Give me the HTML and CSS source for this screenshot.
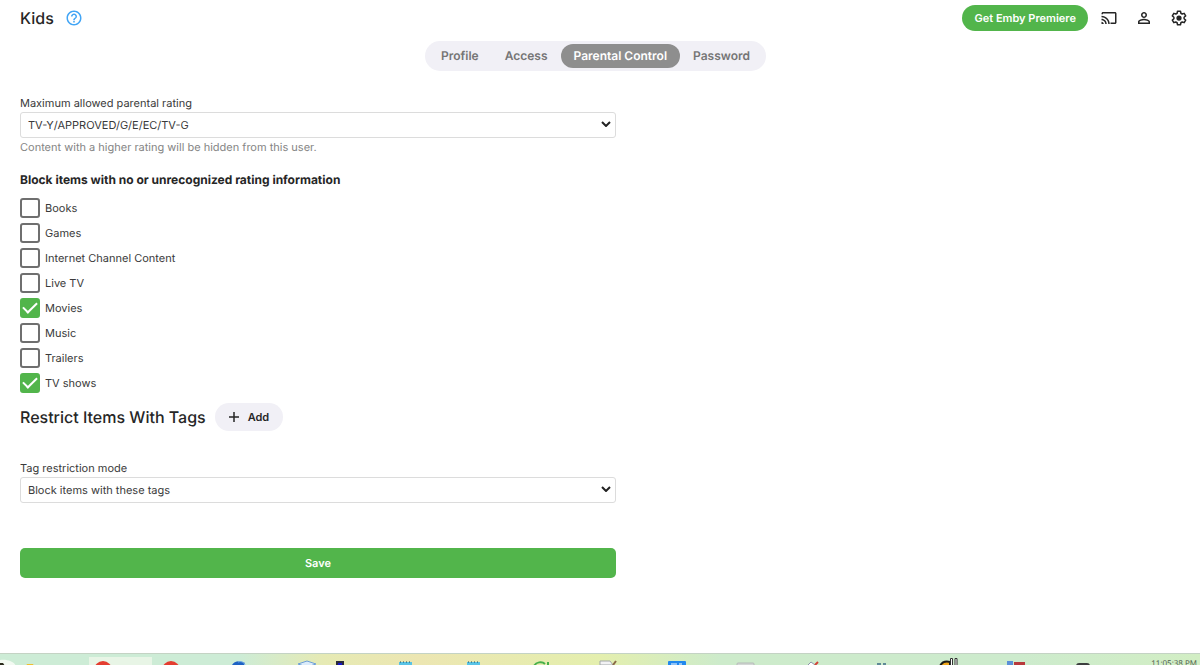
FILE: index.html
```html
<!DOCTYPE html>
<html lang="en">
  <head>
    <meta charset="UTF-8" />
    <meta name="viewport" content="width=device-width, initial-scale=1.0" />
    <title>Kids - Parental Control</title>
    <link rel="stylesheet" href="styles.css">
  </head>

  <body>
    <header class="header">
      <h1 class="header__title">Kids</h1>
      <a href="#" class="header__help" aria-label="Help">
        <svg width="18" height="18" viewBox="0 0 24 24" fill="currentColor">
          <path d="M11 18h2v-2h-2v2zm1-16C6.480 2 2 6.480 2 12s4.480 10 10 10 10-4.480 10-10S17.520 2 12 2zm0 18c-4.410 0-8-3.590-8-8s3.590-8 8-8 8 3.590 8 8-3.590 8-8 8zm0-14c-2.210 0-4 1.790-4 4h2c0-1.100.9-2 2-2s2 .9 2 2c0 2-3 1.750-3 5h2c0-2.250 3-2.500 3-5 0-2.210-1.790-4-4-4z" />
        </svg>
      </a>
      <div class="header__actions">
        <button type="button" class="premiere-btn">Get Emby Premiere</button>
        <button type="button" class="icon-btn" aria-label="Cast">
          <svg width="18" height="18" viewBox="0 0 24 24" fill="currentColor">
            <path d="M20 4H4c-1.100 0-2 .9-2 2v1h2V6h16v12h-6v2h6c1.100 0 2-.9 2-2V6c0-1.100-.9-2-2-2zM2 17v3h3c0-1.660-1.340-3-3-3zm0-4v2c2.760 0 5 2.240 5 5h2c0-3.870-3.130-7-7-7zm0-4v2c4.970 0 9 4.030 9 9h2c0-6.080-4.930-11-11-11z" />
          </svg>
        </button>
        <button type="button" class="icon-btn" aria-label="User">
          <svg width="18" height="18" viewBox="0 0 24 24" fill="currentColor">
            <path d="M12 6c1.100 0 2 .9 2 2s-.9 2-2 2-2-.9-2-2 .9-2 2-2m0 9c2.700 0 5.800 1.290 6 2v1H6v-1c.2-.72 3.300-2 6-2m0-11C9.790 4 8 5.790 8 8s1.790 4 4 4 4-1.790 4-4-1.790-4-4-4zm0 9c-2.670 0-8 1.340-8 4v3h16v-3c0-2.660-5.330-4-8-4z" />
          </svg>
        </button>
        <button type="button" class="icon-btn" aria-label="Settings">
          <svg width="18" height="18" viewBox="0 0 24 24" fill="none" stroke="currentColor" stroke-width="2">
            <path d="M10 3h4l.5 2.700 1.800 1 2.600-.9 2 3.400-2.100 1.800v2l2.100 1.800-2 3.400-2.600-.9-1.800 1L14 21h-4l-.5-2.700-1.800-1-2.600.9-2-3.400L5.200 13v-2L3.100 9.200l2-3.400 2.600.9 1.800-1z" stroke-linejoin="round" />
            <circle cx="12" cy="12" r="2.500" fill="currentColor" />
          </svg>
        </button>
      </div>
    </header>

    <nav class="tabs">
      <a href="#" class="tabs__item">Profile</a>
      <a href="#" class="tabs__item">Access</a>
      <a href="#" class="tabs__item tabs__item--active">Parental Control</a>
      <a href="#" class="tabs__item">Password</a>
    </nav>

    <main class="content">
      <form class="form">
        <label for="rating" class="label">Maximum allowed parental rating</label>
        <div class="select">
          <select id="rating">
            <option>TV-Y/APPROVED/G/E/EC/TV-G</option>
          </select>
          <svg class="select__arrow" width="10" height="6" viewBox="0 0 10 6">
            <path d="M1 1l4 4 4-4" />
          </svg>
        </div>
        <p class="description">Content with a higher rating will be hidden from this user.</p>

        <h2 class="subheading">Block items with no or unrecognized rating information</h2>
        <div class="checks">
          <label class="check"><input type="checkbox" />Books</label>
          <label class="check"><input type="checkbox" />Games</label>
          <label class="check"><input type="checkbox" />Internet Channel Content</label>
          <label class="check"><input type="checkbox" />Live TV</label>
          <label class="check"><input type="checkbox" checked />Movies</label>
          <label class="check"><input type="checkbox" />Music</label>
          <label class="check"><input type="checkbox" />Trailers</label>
          <label class="check"><input type="checkbox" checked />TV shows</label>
        </div>

        <div class="tags">
          <h2 class="tags__title">Restrict Items With Tags</h2>
          <button type="button" class="add-btn">
            <svg width="10" height="10" viewBox="0 0 10 10">
              <path d="M5 0v10M0 5h10" stroke="currentColor" stroke-width="1.500" />
            </svg>
            Add
          </button>
        </div>

        <label for="mode" class="label">Tag restriction mode</label>
        <div class="select">
          <select id="mode">
            <option>Block items with these tags</option>
          </select>
          <svg class="select__arrow" width="10" height="6" viewBox="0 0 10 6">
            <path d="M1 1l4 4 4-4" />
          </svg>
        </div>

        <button type="submit" class="save-btn">Save</button>
      </form>
    </main>

    <footer class="taskbar">
      <div class="taskbar__start">
        <svg width="89" height="12" viewBox="0 0 89 12">
          <path d="M0 6c8-1 14 2 16 6H0z" fill="#f3faf2" />
          <path d="M0 9h3l2 3H0z" fill="#2b2a1c" />
          <path d="M26 12l1-2h6l1 2z" fill="#efc02f" />
        </svg>
      </div>
      <div class="task task--active">
        <svg width="20" height="12"><circle cx="10" cy="17" r="9" fill="#e43d30" /></svg>
      </div>
      <div class="task">
        <svg width="20" height="12"><circle cx="10" cy="17" r="9" fill="#e43d30" /></svg>
      </div>
      <div class="task">
        <svg width="20" height="12">
          <path d="M3 12c2-4 8-5 13-2l-1 2z" fill="#1d62c4" />
          <path d="M9 9c3-1 6 0 7 3" fill="none" stroke="#7fb4e8" />
        </svg>
      </div>
      <div class="task task--narrow">
        <svg width="20" height="12"><path d="M1 11l9-3 9 3-9 3z" fill="#dcecfa" stroke="#6d9fd8" /></svg>
      </div>
      <div class="task task--mid">
        <svg width="20" height="12">
          <rect x="5" y="8" width="8" height="6" fill="#2a2a3a" />
          <rect x="7" y="10" width="4" height="4" fill="#1414c8" />
        </svg>
      </div>
      <div class="task">
        <svg width="20" height="12">
          <rect x="4" y="9" width="13" height="5" fill="#58c3e6" />
          <path d="M5 9h11" stroke="#1e4c5c" stroke-dasharray="1 2" />
        </svg>
      </div>
      <div class="task">
        <svg width="20" height="12">
          <rect x="4" y="9" width="13" height="5" fill="#58c3e6" />
          <path d="M5 9h11" stroke="#1e4c5c" stroke-dasharray="1 2" />
        </svg>
      </div>
      <div class="task">
        <svg width="20" height="12"><path d="M3 13c2-4 8-5 11-2M17 9v4" fill="none" stroke="#46b04a" stroke-width="2" /></svg>
      </div>
      <div class="task">
        <svg width="20" height="12">
          <path d="M1 8h10l3 4H1z" fill="#f2f2f4" stroke="#a3a8a8" />
          <path d="M17 8l-3 4" stroke="#8a6a48" stroke-width="2" />
        </svg>
      </div>
      <div class="task">
        <svg width="20" height="12">
          <rect x="1" y="8" width="18" height="6" rx="1" fill="#2188ee" />
          <path d="M4 11h6M12 11h3" stroke="#fff" />
        </svg>
      </div>
      <div class="task">
        <svg width="20" height="12"><rect x="2" y="10" width="17" height="5" rx="1" fill="#d3d8d5" stroke="#b5bab8" /></svg>
      </div>
      <div class="task">
        <svg width="20" height="12">
          <path d="M5 12l3-3 4 3" fill="#fff" stroke="#8a93a8" />
          <path d="M15 9l-3 3" stroke="#d14438" stroke-width="2" />
        </svg>
      </div>
      <div class="task">
        <svg width="20" height="12"><path d="M6 11h4M12 11h3" stroke="#5f8a96" stroke-width="2" /></svg>
      </div>
      <div class="task">
        <svg width="20" height="12">
          <path d="M1 13c2-4 6-5 10-4v4z" fill="#f0a91c" stroke="#1c1c18" stroke-width="2" />
          <path d="M11.500 12V5.500h2V12M16 12V5.500h2V12" fill="#fff" stroke="#333" />
        </svg>
      </div>
      <div class="task">
        <svg width="20" height="12">
          <rect x="0" y="8" width="6" height="6" fill="#5a8fd8" />
          <rect x="7" y="9" width="11" height="5" fill="#b8393c" />
        </svg>
      </div>
      <div class="task">
        <svg width="20" height="12"><rect x="1" y="10" width="14" height="6" rx="3" fill="#3c3f3e" /></svg>
      </div>
      <time class="taskbar__clock">11:05:38 PM</time>
    </footer>
  </body>
</html>
```
FILE: styles.css
```css
* {
  box-sizing: border-box;
}
body {
  margin: 0;
  height: 100vh;
  display: flex;
  flex-direction: column;
  background-color: #fff;
  color: #262626;
  font-family: Inter, "Liberation Sans", sans-serif;
  font-size: 11px;
  line-height: 16px;
  text-rendering: geometricPrecision;
}
button,
select {
  font: inherit;
  color: inherit;
  border: 0;
  text-rendering: inherit;
}
svg {
  display: block;
}
h1,
h2,
p {
  margin: 0;
}

.header {
  display: flex;
  align-items: center;
  padding: 5px 10px 0 20px;
}
.header__title {
  font-size: 16px;
  font-weight: 500;
  line-height: 24px;
}
.header__help {
  margin-left: 11px;
  color: #42a5f5;
}
.header__actions {
  display: flex;
  align-items: center;
  gap: 13px;
  margin-left: auto;
}
.premiere-btn {
  margin-right: -3px;
  padding: 5px 12px;
  border-radius: 13px;
  background-color: #52b54b;
  color: #fff;
  font-weight: 600;
}
.icon-btn {
  padding: 2px;
  background: none;
}

.tabs {
  align-self: center;
  display: flex;
  margin: 10px 9px 0 0;
  padding: 3px;
  border-radius: 15px;
  background-color: #f1f0f6;
}
.tabs__item {
  padding: 4px 13px;
  border-radius: 12px;
  color: #757575;
  font-size: 12px;
  font-weight: 600;
  text-decoration: none;
}
.tabs__item--active {
  background-color: #8e8e8e;
  color: #fff;
}

.content {
  flex: 1;
  padding: 24px 20px 0;
}
.form {
  max-width: 596px;
}
.label {
  display: block;
  margin-bottom: 1px;
  color: #3a3a3a;
}
.select {
  position: relative;
}
.select select {
  display: block;
  width: 100%;
  padding: 4px 7px;
  border: 1px solid #dcdcdc;
  border-radius: 3px;
  background-color: #fff;
  color: #3a3a3a;
  appearance: none;
}
.select__arrow {
  position: absolute;
  top: 9px;
  right: 5px;
  fill: none;
  stroke: #222;
  stroke-width: 2;
}
.description {
  margin-top: 1px;
  color: #858585;
}

.subheading {
  margin-top: 17px;
  font-size: 12px;
  font-weight: 700;
}
.checks {
  display: grid;
  gap: 5px;
  margin-top: 10px;
}
.check {
  display: flex;
  align-items: center;
  gap: 5px;
  color: #3a3a3a;
}
.check input {
  appearance: none;
  width: 20px;
  height: 20px;
  margin: 0;
  border: 2px solid #6f6f6f;
  border-radius: 3px;
}
.check input:checked {
  display: grid;
  place-items: center;
  border-color: #52b54b;
  background-color: #52b54b;
}
.check input:checked::before {
  content: "";
  width: 12px;
  height: 6px;
  margin-bottom: 5px;
  border: solid #fff;
  border-width: 0 0 2px 2px;
  transform: rotate(-45deg);
}

.tags {
  display: flex;
  align-items: center;
  gap: 9px;
  margin: 10px 0 29px;
}
.tags__title {
  font-size: 16px;
  font-weight: 500;
  line-height: 24px;
}
.add-btn {
  display: flex;
  align-items: center;
  gap: 9px;
  padding: 6px 14px;
  border-radius: 14px;
  background-color: #f1f0f6;
  font-weight: 600;
}
.save-btn {
  width: 100%;
  margin-top: 45px;
  padding: 7px;
  border-radius: 5px;
  background-color: #52b54b;
  color: #fff;
  font-weight: 600;
}

.taskbar {
  display: flex;
  height: 12px;
  overflow: hidden;
  border-top: 1px solid #c4d3c4;
  background: linear-gradient(90deg, #cdecd6 0, #cdecd6 20%, #e6eab4 27%, #ece6b2 35%, #e4efae 50%, #cdebcb 60%, #cdebcd 85%, #d2eec4 100%);
}
.taskbar__start {
  width: 89px;
}
.task {
  flex: none;
  width: 68px;
  padding-left: 4px;
}
.task svg {
  margin-top: -1px;
}
.task--active {
  background: linear-gradient(#e8f5e6, #e8f5e6) 0 3px / 63px 12px no-repeat;
}
.task--narrow {
  width: 34px;
}
.task--mid {
  width: 64px;
}
.taskbar__clock {
  margin: 4px 3px 0 auto;
  color: #4c5a4c;
  font-family: "Open Sans", sans-serif;
  font-size: 8px;
  line-height: 12px;
  white-space: nowrap;
}
```
